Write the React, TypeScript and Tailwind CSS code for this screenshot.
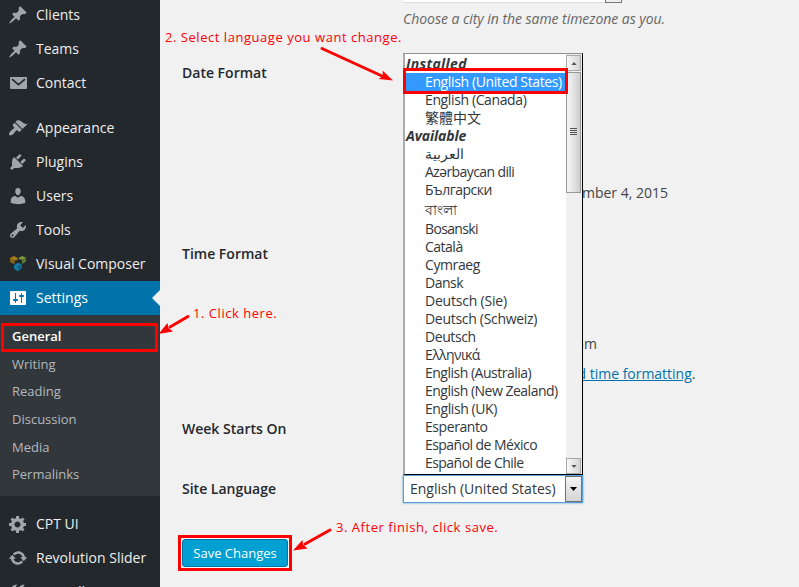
import type { ReactNode } from "react";

const PIN =
  "M10.44 3.02l1.82-1.82 6.36 6.35-1.83 1.82c-1.05-.68-2.48-.57-3.41.36l-.75.75c-.92.93-1.04 2.35-.35 3.41l-1.83 1.82-2.41-2.41-2.8 2.79c-.42.42-3.38 2.71-3.8 2.29s1.86-3.39 2.28-3.81l2.79-2.79L4.1 9.36l1.83-1.82c1.05.69 2.48.57 3.4-.36l.75-.75c.93-.92 1.05-2.35.36-3.41z";
const BRUSH =
  "M14.48 11.06L7.41 3.99l1.5-1.5c.5-.56 2.3-.47 3.51.32 1.21.8 1.43 1.28 2.91 2.1 1.18.64 2.45 1.26 4.45.85zm-.71.71L6.7 4.7 4.93 6.47c-.39.39-.39 1.02 0 1.41l1.06 1.06c.39.39.39 1.03 0 1.42-.6.6-1.43 1.11-2.21 1.69-.35.26-.7.53-1.01.84C1.43 14.23.4 16.08 1.4 17.07c.99 1 2.84-.03 4.18-1.36.31-.31.58-.66.85-1.02.57-.78 1.08-1.61 1.69-2.21.39-.39 1.02-.39 1.41 0l1.06 1.06c.39.39 1.02.39 1.41 0z";
const PLUG =
  "M13.11 4.36L9.87 7.6 8 5.73l3.24-3.24c.35-.34 1.05-.2 1.56.32.52.51.66 1.21.31 1.55zm-8 1.77l.91-1.12 9.01 9.01-1.19.84c-.71.71-2.63 1.16-3.82 1.16H6.14L4.9 17.26c-.59.59-1.54.59-2.12 0-.59-.58-.59-1.53 0-2.12l1.24-1.24v-3.88c0-1.13.4-3.19 1.09-3.89zm7.26 3.97l3.24-3.24c.34-.35 1.04-.21 1.55.31.52.51.66 1.21.31 1.55l-3.24 3.25z";
const USER =
  "M10 9.25c-2.27 0-2.73-3.44-2.73-3.44C7 4.02 7.82 2 9.97 2c2.16 0 2.98 2.02 2.71 3.81 0 0-.41 3.44-2.68 3.44zm0 2.57L12.72 10c2.39 0 4.52 2.33 4.52 4.53v2.49s-3.65 1.13-7.24 1.13c-3.65 0-7.24-1.13-7.24-1.13v-2.49c0-2.25 1.94-4.48 4.47-4.48z";
const WRENCH =
  "M16.68 9.77c-1.34 1.34-3.3 1.67-4.95.99l-5.41 6.52c-.99.99-2.59.99-3.58 0s-.99-2.59 0-3.57l6.52-5.42c-.68-1.65-.35-3.61.99-4.95 1.28-1.28 3.12-1.62 4.72-1.06l-2.89 2.89 2.82 2.82 2.86-2.87c.53 1.58.18 3.39-1.08 4.65zM3.81 16.21c.4.39 1.04.39 1.43 0 .4-.4.4-1.04 0-1.43-.39-.4-1.03-.4-1.43 0-.39.39-.39 1.03 0 1.43z";
const SLIDERS =
  "M18 16V4c0-.55-.45-1-1-1H3c-.55 0-1 .45-1 1v12c0 .55.45 1 1 1h14c.55 0 1-.45 1-1zM8 11h1c.55 0 1 .45 1 1s-.45 1-1 1H8v1.5c0 .28-.22.5-.5.5s-.5-.22-.5-.5V13H6c-.55 0-1-.45-1-1s.45-1 1-1h1V5.5c0-.28.22-.5.5-.5s.5.22.5.5V11zm5-2h-1c-.55 0-1-.45-1-1s.45-1 1-1h1V5.5c0-.28.22-.5.5-.5s.5.22.5.5V7h1c.55 0 1 .45 1 1s-.45 1-1 1h-1v5.5c0 .28-.22.5-.5.5s-.5-.22-.5-.5V9z";
const GEAR =
  "M18 12h-2.18c-.17.7-.44 1.35-.81 1.93l1.54 1.54-2.1 2.1-1.54-1.54c-.58.36-1.23.63-1.91.79V19H8v-2.18c-.68-.16-1.33-.43-1.91-.79l-1.54 1.54-2.12-2.12 1.54-1.54c-.36-.58-.63-1.23-.79-1.91H1V9.03h2.17c.16-.7.44-1.35.8-1.94L2.43 5.55l2.1-2.1 1.54 1.54c.58-.37 1.24-.64 1.93-.81V2h3v2.18c.68.16 1.33.43 1.91.79l1.54-1.54 2.12 2.12-1.54 1.54c.36.59.64 1.24.8 1.94H18V12zm-8.5 1.5c1.66 0 3-1.34 3-3s-1.34-3-3-3-3 1.34-3 3 1.34 3 3 3z";
const UPDATE =
  "M10.2 3.28c3.53 0 6.43 2.61 6.92 6h2.08l-3.5 4-3.5-4h2.32c-.45-1.97-2.21-3.45-4.32-3.45-1.45 0-2.73.71-3.54 1.78L4.95 5.66C6.23 4.2 8.11 3.28 10.2 3.28zm-.4 13.44c-3.52 0-6.43-2.61-6.92-6H.8l3.5-4c1.17 1.33 2.33 2.67 3.5 4H5.48c.45 1.97 2.21 3.45 4.32 3.45 1.45 0 2.73-.71 3.54-1.78l1.71 1.95c-1.28 1.46-3.15 2.38-5.25 2.38z";

function Glyph({ children }: { children: ReactNode }) {
  return (
    <svg viewBox="0 0 20 20" className="size-5 shrink-0 fill-current">
      {children}
    </svg>
  );
}

function MenuItem({ icon, label, active }: { icon: ReactNode; label: string; active?: boolean }) {
  return (
    <div
      className={
        active
          ? "relative flex h-[34px] shrink-0 items-center gap-2 bg-[#0073aa] pl-2 text-white"
          : "flex h-[34px] shrink-0 items-center gap-2 pl-2 text-[#a0a5aa]"
      }
    >
      <Glyph>{icon}</Glyph>
      <span className={active ? "whitespace-nowrap text-white" : "whitespace-nowrap text-[#eeeeee]"}>{label}</span>
      {active && (
        <span className="absolute top-[9px] right-0 border-y-8 border-r-8 border-y-transparent border-r-[#f1f1f1]" />
      )}
    </div>
  );
}

function Sidebar() {
  return (
    <nav className="-mt-0.5 flex h-[589px] w-40 shrink-0 flex-col overflow-hidden bg-[#23282d]">
      <MenuItem label="Clients" icon={<path d={PIN} />} />
      <MenuItem label="Teams" icon={<path d={PIN} />} />
      <MenuItem
        label="Contact"
        icon={
          <>
            <path d="M3 4h15q1 0 1 1v10q0 1-1 1H3q-1 0-1-1V5q0-1 1-1z" />
            <path d="M4 6.2l6.5 5.4L17 6.2" fill="none" stroke="#23282d" strokeWidth="1.7" />
          </>
        }
      />
      <div className="h-[11px] shrink-0" />
      <MenuItem label="Appearance" icon={<path d={BRUSH} />} />
      <MenuItem label="Plugins" icon={<path d={PLUG} />} />
      <MenuItem label="Users" icon={<path d={USER} />} />
      <MenuItem label="Tools" icon={<path d={WRENCH} />} />
      <MenuItem
        label="Visual Composer"
        icon={
          <>
            <path d="M2 4l4-2 3.500 2v2L6.500 6.500V10L2 8z" fill="#a87916" />
            <path d="M2 4.500l4 1.500v4L2 8z" fill="#81611d" />
            <path d="M10.500 4L14 2l4 1.500-3.500 2.300v0l-4-.8z" fill="#7c993b" />
            <path d="M14 6l4-2v3.500L14 10z" fill="#617d2c" />
            <path d="M6 11l4-2.200 4 1.500L10 12.500z" fill="#167ba5" />
            <path d="M10 12.500l4-2v3.500l-4 3.500z" fill="#10638a" />
            <path d="M6 11l4 1.500v5L6 14.500z" fill="#167ba5" />
          </>
        }
      />
      <MenuItem active label="Settings" icon={<path d={SLIDERS} />} />
      <div className="flex h-[181px] shrink-0 flex-col bg-[#32373c] pt-[7.500px] pl-3 text-[13px] text-[#b4b9be]">
        {["General", "Writing", "Reading", "Discussion", "Media", "Permalinks"].map((name, i) => (
          <span
            key={name}
            className={
              i === 0
                ? "flex h-[27.6px] items-center font-semibold text-white"
                : "flex h-[27.6px] items-center"
            }
          >
            {name}
          </span>
        ))}
      </div>
      <div className="h-[11px] shrink-0" />
      <MenuItem label="CPT UI" icon={<path d={GEAR} />} />
      <MenuItem label="Revolution Slider" icon={<path d={UPDATE} />} />
      <MenuItem
        label="FooGallery"
        icon={<path d="M3 8c0-3 2-5 6-5.500l-1 2c-1 1-1 2 0 3v6H3zM10.500 8c0-3 2-5 6-5.500l-1 2c-1 1-1 2 0 3v6h-5z" />}
      />
    </nav>
  );
}

const OPTIONS: { text: string; kind?: "group" | "selected" | "tall"; track?: string }[] = [
  { text: "Installed", kind: "group", track: "tracking-[0.3px]" },
  { text: "English (United States)", kind: "selected", track: "tracking-[-0.38px]" },
  { text: "English (Canada)", track: "tracking-[-0.38px]" },
  { text: "繁體中文", track: "tracking-normal" },
  { text: "Available", kind: "group", track: "tracking-[-0.1px]" },
  { text: "العربية", track: "tracking-normal" },
  { text: "Azərbaycan dili", track: "tracking-[-0.6px]" },
  { text: "Български", track: "tracking-[-0.5px]" },
  { text: "বাংলা", kind: "tall", track: "tracking-normal" },
  { text: "Bosanski", track: "tracking-[-0.65px]" },
  { text: "Català", track: "tracking-[-0.5px]" },
  { text: "Cymraeg", track: "tracking-[-0.4px]" },
  { text: "Dansk", track: "tracking-[-0.5px]" },
  { text: "Deutsch (Sie)", track: "tracking-[-0.2px]" },
  { text: "Deutsch (Schweiz)", track: "tracking-[-0.3px]" },
  { text: "Deutsch" },
  { text: "Ελληνικά", track: "tracking-[-0.6px]" },
  { text: "English (Australia)", track: "tracking-[-0.5px]" },
  { text: "English (New Zealand)", track: "tracking-[-0.5px]" },
  { text: "English (UK)" },
  { text: "Esperanto" },
  { text: "Español de México", track: "tracking-[-0.55px]" },
  { text: "Español de Chile", track: "tracking-[-0.55px]" },
];

function optionClass(kind?: string) {
  if (kind === "group") return "flex h-[18px] shrink-0 items-center pl-px font-bold italic";
  if (kind === "selected") return "flex h-[18px] shrink-0 items-center bg-[#3399ff] pl-5 text-white";
  if (kind === "tall") return "flex h-[21px] shrink-0 items-center pl-5";
  return "flex h-[18px] shrink-0 items-center pl-5";
}

function ScrollButton({ up }: { up?: boolean }) {
  return (
    <span className="flex h-4 w-[15px] items-center justify-center border border-[#a8a8a8] bg-linear-to-r from-[#f8f8f8] to-[#d4d4d4]">
      <svg viewBox="0 0 7 4" className="h-[3px] w-1.5 fill-[#555]">
        <path d={up ? "M0 4L3.500 0L7 4z" : "M0 0L3.500 4L7 0z"} />
      </svg>
    </span>
  );
}

function LanguageList() {
  return (
    <div className="absolute bottom-full left-0 flex h-[422px] w-[180px] border-t border-r border-b border-l-2 border-t-[#8f8f8f] border-r-black border-b-black border-l-[#ababab] bg-white">
      <div className="flex w-[161px] flex-col overflow-hidden pt-px tracking-[-0.42px] whitespace-nowrap text-[#32373c] [font-family:'Open_Sans','Noto_Sans_CJK_TC',sans-serif]">
        {OPTIONS.map((o) => (
          <div key={o.text} className={optionClass(o.kind)}>
            <span className={o.track}>{o.text}</span>
          </div>
        ))}
      </div>
      <div className="flex w-4 flex-col justify-between bg-[#f0f0f0] pt-px">
        <div className="flex flex-col gap-px">
          <ScrollButton up />
          <div className="flex h-[121px] w-[15px] flex-col items-center justify-center gap-px border border-[#999] bg-linear-to-r from-[#f6f6f6] to-[#cfcfd2] pb-0.5">
            <span className="h-px w-[7px] bg-[#555]" />
            <span className="h-px w-[7px] bg-[#555]" />
            <span className="h-px w-[7px] bg-[#555]" />
            <span className="h-px w-[7px] bg-[#555]" />
          </div>
        </div>
        <ScrollButton />
      </div>
    </div>
  );
}

function LanguageSelect() {
  return (
    <div className="relative flex h-7 w-[180px] border border-[#5b9dd9] bg-white shadow-[0_0_2px_rgba(30,140,190,.8)]">
      <span className="flex flex-1 items-center pl-1.5 whitespace-nowrap text-[#32373c]">English (United States)</span>
      <span className="flex w-[17px] items-center justify-center border border-[#707070] bg-linear-to-b from-[#f4f4f4] to-[#d4d4d4]">
        <svg viewBox="0 0 7 4" className="h-1 w-[7px] fill-black">
          <path d="M0 0L3.500 4L7 0z" />
        </svg>
      </span>
      <div className="absolute bottom-[27px] left-[-1px]">
        <LanguageList />
      </div>
    </div>
  );
}

function Row({ label, height, children }: { label: string; height: string; children?: ReactNode }) {
  return (
    <div className={`flex shrink-0 ${height}`}>
      <div className="flex h-7 w-[221px] shrink-0 items-center font-semibold text-[#23282d]">{label}</div>
      <div className="flex flex-col">{children}</div>
    </div>
  );
}

function Note({ className, children }: { className: string; children: ReactNode }) {
  return (
    <span
      className={`absolute flex h-5 items-center text-[13px] tracking-[0.54px] whitespace-nowrap text-[#ff0000] ${className}`}
    >
      {children}
    </span>
  );
}

export default function App() {
  return (
    <div className="relative flex h-[587px] w-[799px] overflow-hidden bg-[#f1f1f1] text-[14px] leading-[18px] [font-family:'Open_Sans',sans-serif]">
      <Sidebar />
      <main className="flex flex-1 flex-col pl-[22px] text-[#444]">
        <div className="flex h-[59px] shrink-0 flex-col pl-[221px]">
          <div className="flex h-[3px] w-[219px] justify-end border-b border-[#ddd] bg-white">
            <span className="h-[3px] w-[17px] border-x border-b border-[#777] bg-[#eee]" />
          </div>
          <em className="mt-[7px] tracking-[-0.04px] text-[#666]">Choose a city in the same timezone as you.</em>
        </div>
        <Row label="Date Format" height="h-[181px]">
          <span className="mt-[125px] w-[265px] text-right">December 4, 2015</span>
        </Row>
        <Row label="Time Format" height="h-[175px]">
          <span className="mt-[95px] w-[194px] text-right">12:34 am</span>
          <span className="mt-3 tracking-[-0.02px] whitespace-nowrap">
            <a className="text-[#0073aa] underline">Documentation on date and time formatting</a>.
          </span>
        </Row>
        <Row label="Week Starts On" height="h-[60px]" />
        <Row label="Site Language" height="h-[60px]">
          <LanguageSelect />
        </Row>
        <div className="-ml-1 flex h-9 w-[114px] shrink-0 items-center justify-center border-3 border-[#ff0000] bg-[#f8f8f8]">
          <button className="flex h-7 w-[106px] shrink-0 items-center justify-center rounded-[3px] border border-[#0073aa] bg-[#00a0d2] text-[13px] text-white">
            Save Changes
          </button>
        </div>
      </main>

      <div className="absolute top-[323px] left-px h-[29px] w-[157px] border-3 border-[#ff0000]" />
      <div className="absolute top-[68px] left-[403px] h-[26px] w-[165px] border-3 border-[#ff0000]" />
      <Note className="top-[27px] left-[165px]">2. Select language you want change.</Note>
      <Note className="top-[303px] left-[193px]">1. Click here.</Note>
      <Note className="top-[517px] left-[336px]">3. After finish, click save.</Note>
      <svg viewBox="0 0 799 587" className="pointer-events-none absolute inset-0 size-full fill-[#ff0000] stroke-[#ff0000]">
        <g strokeWidth="3" strokeLinecap="round">
          <path d="M322 48.500L382 76" />
          <path d="M188 316.500L170 327" />
          <path d="M330 530L305 544" />
        </g>
        <g stroke="none">
          <path d="M393 80.500L382.500 70.500L383 76L378.500 79z" />
          <path d="M158.500 334L167.500 323L168.500 328L173 331.500z" />
          <path d="M293 550.500L302.500 540L303 544.500L307.500 548.500z" />
        </g>
      </svg>
    </div>
  );
}
